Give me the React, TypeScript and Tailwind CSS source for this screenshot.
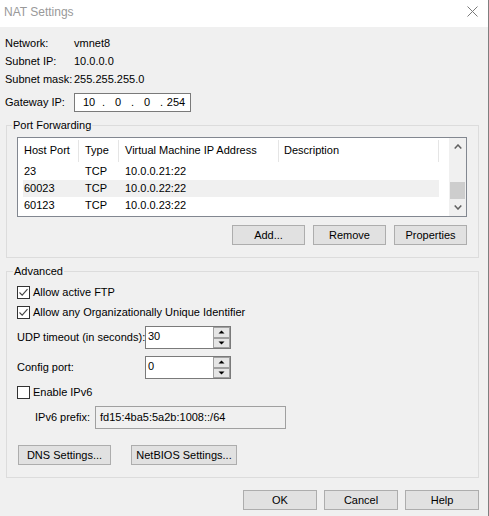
import type { ReactNode } from 'react'

const rows = [
  { port: '23', type: 'TCP', ip: '10.0.0.21:22', selected: false },
  { port: '60023', type: 'TCP', ip: '10.0.0.22:22', selected: true },
  { port: '60123', type: 'TCP', ip: '10.0.0.23:22', selected: false },
]

function Btn({ children, className = '' }: { children: ReactNode; className?: string }) {
  return (
    <button
      className={`flex h-[20px] items-center justify-center border border-[#adadad] bg-[#e1e1e1] text-black ${className}`}
    >
      {children}
    </button>
  )
}

function Checkbox({ checked, label }: { checked: boolean; label: string }) {
  return (
    <div className="flex h-[20px] items-center gap-[3px]">
      <span className="flex size-[13px] shrink-0 items-center justify-center border border-[#333333] bg-white">
        {checked && (
          <svg width="11" height="11" viewBox="0 0 11 11">
            <path d="M1.5 5.5 L4.2 8.2 L9.5 2.2" fill="none" stroke="#444" strokeWidth="1.1" />
          </svg>
        )}
      </span>
      <span>{label}</span>
    </div>
  )
}

function Spin({ value }: { value: string }) {
  return (
    <div className="flex h-[23px] w-[86px] shrink-0 border border-[#7a7a7a] bg-white">
      <span className="flex-1 pl-[2px] leading-[19px]">{value}</span>
      <div className="flex w-[17px] flex-col">
        {[0, 1].map((i) => (
          <span
            key={i}
            className="flex flex-1 items-center justify-center border border-[#a0a0a0] bg-[#e5e5e5]"
          >
            <svg width="7" height="4" viewBox="0 0 7 4">
              <path d={i === 0 ? 'M0.5 3.5 L3.5 0.5 L6.5 3.5 Z' : 'M0.5 0.5 L3.5 3.5 L6.5 0.5 Z'} fill="#000" />
            </svg>
          </span>
        ))}
      </div>
    </div>
  )
}

function Chevron({ up }: { up: boolean }) {
  return (
    <svg width="8" height="5" viewBox="0 0 8 5">
      <path
        d={up ? 'M0.7 4.5 L4 1 L7.3 4.5' : 'M0.7 0.5 L4 4 L7.3 0.5'}
        fill="none"
        stroke="#606060"
        strokeWidth="1.5"
      />
    </svg>
  )
}

export default function App() {
  return (
    <div className="flex h-[516px] w-[489px] whitespace-nowrap font-['Liberation_Sans',Arial,sans-serif] text-[11px] text-black">
      <div className="w-[488px] bg-[#f0f0f0]">
        {/* title bar */}
        <div className="flex h-[27px] items-start justify-between bg-white">
          <span className="pl-[4px] pt-[4px] text-[12px] leading-[16px] text-[#999999]">NAT Settings</span>
          <svg className="mr-[10px] mt-[6px]" width="11" height="11" viewBox="0 0 11 11">
            <path d="M0.5 0.5 L10.5 10.5 M10.5 0.5 L0.5 10.5" stroke="#7a7a7a" strokeWidth="1" />
          </svg>
        </div>

        <div className="pl-[5px] pt-[7px]">
          <div className="flex h-[18px] items-center">
            <span className="w-[69px] shrink-0">Network:</span>
            <span>vmnet8</span>
          </div>
          <div className="flex h-[18px] items-center">
            <span className="w-[69px] shrink-0">Subnet IP:</span>
            <span>10.0.0.0</span>
          </div>
          <div className="flex h-[18px] items-center">
            <span className="w-[69px] shrink-0">Subnet mask:</span>
            <span>255.255.255.0</span>
          </div>
          <div className="mt-[5px] flex h-[19px] items-center">
            <span className="w-[69px] shrink-0">Gateway IP:</span>
            <div className="flex h-[19px] w-[117px] items-center border border-[#7a7a7a] bg-white pl-[4px]">
              <span className="w-[20px] text-center">10</span>
              <span className="w-[9px] text-center">.</span>
              <span className="w-[20px] text-center">0</span>
              <span className="w-[9px] text-center">.</span>
              <span className="w-[20px] text-center">0</span>
              <span className="w-[9px] text-center">.</span>
              <span className="w-[20px] text-center">254</span>
            </div>
          </div>
        </div>

        <div className="ml-[6px] w-[473px]">
          {/* Port forwarding */}
          <fieldset className="mt-[5px] border border-[#dcdcdc]">
            <legend className="ml-[5px] px-px leading-[16px]">Port Forwarding</legend>
            <div className="px-[10px] pb-[12px]">
              <div className="mt-[4px] flex h-[80px] w-[450px] border border-[#828790] bg-white">
                <div className="flex flex-1 flex-col">
                  <div className="flex h-[25px] items-center">
                    <span className="w-[60px] pl-[6px]">Host Port</span>
                    <span className="h-[22px] w-px bg-[#e5e5e5]" />
                    <span className="w-[39px] pl-[6px]">Type</span>
                    <span className="h-[22px] w-px bg-[#e5e5e5]" />
                    <span className="w-[159px] pl-[6px]">Virtual Machine IP Address</span>
                    <span className="h-[22px] w-px bg-[#e5e5e5]" />
                    <span className="w-[159px] pl-[5px]">Description</span>
                    <span className="h-[22px] w-px bg-[#e5e5e5]" />
                  </div>
                  {rows.map((r) => (
                    <div
                      key={r.port}
                      className={`ml-[5px] flex h-[17px] w-[416px] items-center ${r.selected ? 'bg-[#f0f0f0]' : ''}`}
                    >
                      <span className="w-[62px] pl-px">{r.port}</span>
                      <span className="w-[40px]">{r.type}</span>
                      <span>{r.ip}</span>
                    </div>
                  ))}
                </div>
                <div className="flex w-[17px] flex-col bg-[#f0f0f0]">
                  <span className="flex h-[17px] items-center justify-center">
                    <Chevron up />
                  </span>
                  <span className="flex-1" />
                  <span className="mx-px h-[17px] bg-[#cdcdcd]" />
                  <span className="flex h-[17px] items-center justify-center">
                    <Chevron up={false} />
                  </span>
                </div>
              </div>
              <div className="mr-px mt-[8px] flex justify-end gap-[8px]">
                <Btn className="w-[73px]">Add...</Btn>
                <Btn className="w-[73px]">Remove</Btn>
                <Btn className="w-[73px]">Properties</Btn>
              </div>
            </div>
          </fieldset>

          {/* Advanced */}
          <fieldset className="mt-[5px] border border-[#dcdcdc]">
            <legend className="ml-[6px] px-px leading-[16px]">Advanced</legend>
            <div className="px-[10px] pb-[12px]">
              <div className="mt-[3px]">
                <Checkbox checked label="Allow active FTP" />
                <Checkbox checked label="Allow any Organizationally Unique Identifier" />
              </div>
              <div className="mt-[4px] flex items-center">
                <span className="w-[128px] shrink-0">UDP timeout (in seconds):</span>
                <Spin value="30" />
              </div>
              <div className="mt-[7px] flex items-center">
                <span className="w-[128px] shrink-0">Config port:</span>
                <Spin value="0" />
              </div>
              <div className="mt-[3px]">
                <Checkbox checked={false} label="Enable IPv6" />
              </div>
              <div className="mt-[4px] flex items-center pl-[18px]">
                <span className="w-[60px] shrink-0">IPv6 prefix:</span>
                <div className="flex h-[23px] w-[191px] items-center border border-[#a0a0a0] bg-[#f0f0f0] pl-[4px]">
                  fd15:4ba5:5a2b:1008::/64
                </div>
              </div>
              <div className="ml-px mt-[16px] flex gap-[20px]">
                <Btn className="w-[93px]">DNS Settings...</Btn>
                <Btn className="w-[106px]">NetBIOS Settings...</Btn>
              </div>
            </div>
          </fieldset>

          <div className="mt-[12px] flex justify-end gap-[7px]">
            <Btn className="w-[74px]">OK</Btn>
            <Btn className="w-[74px]">Cancel</Btn>
            <Btn className="w-[74px]">Help</Btn>
          </div>
        </div>
      </div>
      <div className="w-px bg-[#7f7f7f]" />
    </div>
  )
}
